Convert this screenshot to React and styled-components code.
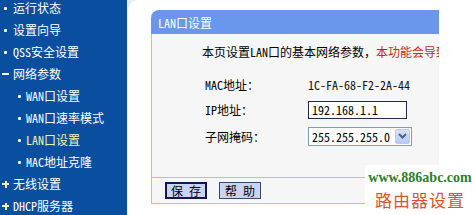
import React from "react";
import styled, { createGlobalStyle } from "styled-components";

const FONT = `"Noto Sans Mono CJK SC", "Noto Sans CJK SC", "Liberation Sans", sans-serif`;
const ORANGE = "#f0b46a";

const GlobalStyle = createGlobalStyle`
  html, body {
    margin: 0;
    padding: 0;
    background: #fff;
    overflow: hidden;
  }
  body {
    font-family: ${FONT};
    font-size: 12px;
    color: #000;
  }
`;

const Page = styled.div`
  position: relative;
  display: flex;
  width: 475px;
  height: 215px;
  overflow: hidden;
  background: #e6ecf5;
`;

const Sidebar = styled.nav`
  width: 127px;
  flex-shrink: 0;
  background: #0a4f9f;
  overflow: hidden;
`;

const Menu = styled.ul`
  list-style: none;
  margin: -3px 0 0;
  padding: 0;
`;

const MenuItem = styled.li`
  display: flex;
  align-items: center;
  height: 22px;
  padding-left: ${(p) => (p.$sub ? 18 : 2)}px;
  color: ${(p) => (p.$active ? "#f2f2b2" : "#fff")};
  white-space: nowrap;
  line-height: 12px;
`;

const Marker = styled.span`
  position: relative;
  flex-shrink: 0;
  width: ${(p) => (p.$sub ? 8 : 11)}px;
  height: 12px;

  &::before,
  &::after {
    content: "";
    position: absolute;
    background: ${(p) => (p.$kind === "plus" ? "#f6eebe" : "#fff")};
  }

  &::before {
    ${(p) =>
      p.$kind === "dot"
        ? `left: ${p.$sub ? 0 : 2}px; top: 5px; width: 3px; height: 3px; border-radius: 1px;`
        : `left: 0; top: 5px; width: 7px; height: 2px;`}
  }

  &::after {
    ${(p) =>
      p.$kind === "plus"
        ? `left: 2.5px; top: 2.5px; width: 2px; height: 7px;`
        : `display: none;`}
  }
`;

const Main = styled.main`
  flex: 1;
  margin-left: 1px;
  padding: 10px 0 0 23px;
  background: #fff;
  border-top-left-radius: 10px;
`;

const Panel = styled.section`
  width: 288px;
  overflow: hidden;
`;

const PanelHeader = styled.header`
  display: flex;
  align-items: center;
  height: 24px;
  padding-left: 7px;
  background: #6a96ec;
  border-top-left-radius: 8px;
  color: #fff;
`;

const PanelBody = styled.div`
  border-left: 1px solid ${ORANGE};
  background: #f6f6f6;
`;

const FormSection = styled.div`
  padding: 12px 0 27px 50px;
  border-bottom: 1px solid ${ORANGE};
`;

const Description = styled.p`
  margin: 0;
  line-height: 12px;
  white-space: nowrap;
`;

const Warning = styled.span`
  color: #c42a26;
`;

const FormGrid = styled.div`
  display: grid;
  grid-template-columns: 103px auto;
  grid-template-rows: 25px 25px 28px;
  align-items: center;
  margin: 14px 0 0 3px;
`;

const Label = styled.span`
  white-space: nowrap;
`;

const Value = styled.span`
  color: #111;
`;

const TextInput = styled.input`
  box-sizing: border-box;
  width: 99px;
  height: 18px;
  margin: 0;
  padding: 0 0 0 3px;
  border: 1px solid #1f2c46;
  background: #fff;
  font: 12px ${FONT};
  color: #000;
  outline: none;
`;

const SelectWrap = styled.div`
  position: relative;
  width: 104px;
  height: 19px;
`;

const Select = styled.select`
  box-sizing: border-box;
  width: 100%;
  height: 100%;
  margin: 0;
  padding: 0 0 0 3px;
  border: 1px solid #7f9db9;
  border-radius: 0;
  background: #fff;
  font: 12px ${FONT};
  color: #000;
  appearance: none;
  outline: none;
`;

const SelectArrow = styled.span`
  position: absolute;
  top: 2px;
  right: 2px;
  display: flex;
  align-items: center;
  justify-content: center;
  width: 15px;
  height: 15px;
  box-sizing: border-box;
  border: 1px solid #b9cbf3;
  border-radius: 2px;
  background: linear-gradient(#d6e2fd, #b6c9f7);
  pointer-events: none;
`;

const ButtonBar = styled.div`
  display: flex;
  align-items: flex-start;
  gap: 12px;
  height: 21px;
  padding: 4px 0 0 13px;
  border-bottom: 1px solid ${ORANGE};
`;

const Button = styled.button`
  box-sizing: border-box;
  width: 42px;
  height: 17px;
  margin: 0;
  padding: 0;
  border: ${(p) => (p.$primary ? "2px solid #16184c" : "1px solid #3c4668")};
  background: #c9d3f6;
  font: 12px/13px ${FONT};
  color: #000;
  white-space: pre;
`;

const Watermark = styled.div`
  position: absolute;
  right: 0;
  bottom: 0;
  display: flex;
  flex-direction: column;
  align-items: center;
  width: 110px;
  height: 50px;
  padding-top: 5px;
  box-sizing: border-box;
  background: #fff;
`;

const Site = styled.span`
  font: bold 14px/16px "Liberation Serif", serif;
  color: #2d7d2d;
`;

const Slogan = styled.span`
  margin-top: 4px;
  font: 17px/20px "Noto Sans CJK SC", sans-serif;
  letter-spacing: 1px;
  color: #e2502c;
`;

const menu = [
  { text: "运行状态", kind: "dot" },
  { text: "设置向导", kind: "dot" },
  { text: "QSS安全设置", kind: "dot" },
  { text: "网络参数", kind: "minus" },
  { text: "WAN口设置", kind: "dot", sub: true },
  { text: "WAN口速率模式", kind: "dot", sub: true },
  { text: "LAN口设置", kind: "dot", sub: true, active: true },
  { text: "MAC地址克隆", kind: "dot", sub: true },
  { text: "无线设置", kind: "plus" },
  { text: "DHCP服务器", kind: "plus" },
];

const App = () => {
  return (
    <>
      <GlobalStyle />
      <Page>
        <Sidebar>
          <Menu>
            {menu.map((item) => (
              <MenuItem key={item.text} $sub={item.sub} $active={item.active}>
                <Marker $kind={item.kind} $sub={item.sub} />
                {item.text}
              </MenuItem>
            ))}
          </Menu>
        </Sidebar>
        <Main>
          <Panel>
            <PanelHeader>LAN口设置</PanelHeader>
            <PanelBody>
              <FormSection>
                <Description>
                  本页设置LAN口的基本网络参数，
                  <Warning>本功能会导致路由器重新启动。</Warning>
                </Description>
                <FormGrid>
                  <Label>MAC地址：</Label>
                  <Value>1C-FA-68-F2-2A-44</Value>
                  <Label>IP地址：</Label>
                  <TextInput defaultValue="192.168.1.1" />
                  <Label>子网掩码：</Label>
                  <SelectWrap>
                    <Select defaultValue="255.255.255.0">
                      <option>255.255.255.0</option>
                      <option>255.255.0.0</option>
                      <option>255.0.0.0</option>
                    </Select>
                    <SelectArrow>
                      <svg width="9" height="6" viewBox="0 0 9 6">
                        <path d="M1 1 L4.5 4.5 L8 1" fill="none" stroke="#4d6185" strokeWidth="2" />
                      </svg>
                    </SelectArrow>
                  </SelectWrap>
                </FormGrid>
              </FormSection>
              <ButtonBar>
                <Button $primary>保 存</Button>
                <Button>帮 助</Button>
              </ButtonBar>
            </PanelBody>
          </Panel>
        </Main>
        <Watermark>
          <Site>www.886abc.com</Site>
          <Slogan>路由器设置</Slogan>
        </Watermark>
      </Page>
    </>
  );
};

export default App;
